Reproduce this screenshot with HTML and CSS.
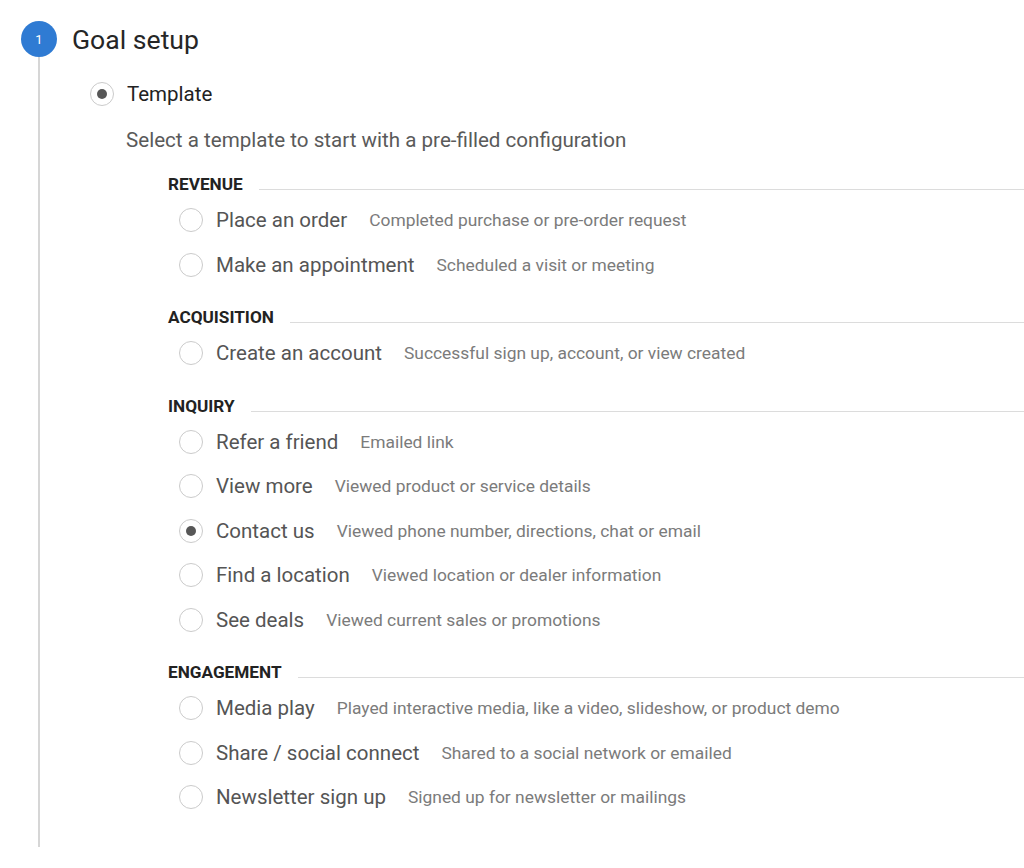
FILE: index.html
```html
<!DOCTYPE html>
<html lang="en">
<head>
  <meta charset="UTF-8" />
  <title>Goal setup</title>
  <link rel="stylesheet" href="styles.css">
</head>
<body>
  <div class="step">
    <div class="step-head">
      <span class="step-num">1</span>
      <h1>Goal setup</h1>
    </div>
    <div class="step-body">
      <label class="template-row">
        <span class="radio checked"></span>
        <span class="template-label">Template</span>
      </label>
      <p class="hint">Select a template to start with a pre-filled configuration</p>

      <div class="group">
        <div class="group-head"><span>REVENUE</span><span class="rule"></span></div>
        <label class="option"><span class="radio"></span><span class="name">Place an order</span><span class="desc">Completed purchase or pre-order request</span></label>
        <label class="option"><span class="radio"></span><span class="name">Make an appointment</span><span class="desc">Scheduled a visit or meeting</span></label>
      </div>

      <div class="group">
        <div class="group-head"><span>ACQUISITION</span><span class="rule"></span></div>
        <label class="option"><span class="radio"></span><span class="name">Create an account</span><span class="desc">Successful sign up, account, or view created</span></label>
      </div>

      <div class="group">
        <div class="group-head"><span>INQUIRY</span><span class="rule"></span></div>
        <label class="option"><span class="radio"></span><span class="name">Refer a friend</span><span class="desc">Emailed link</span></label>
        <label class="option"><span class="radio"></span><span class="name">View more</span><span class="desc">Viewed product or service details</span></label>
        <label class="option"><span class="radio checked"></span><span class="name">Contact us</span><span class="desc">Viewed phone number, directions, chat or email</span></label>
        <label class="option"><span class="radio"></span><span class="name">Find a location</span><span class="desc">Viewed location or dealer information</span></label>
        <label class="option"><span class="radio"></span><span class="name">See deals</span><span class="desc">Viewed current sales or promotions</span></label>
      </div>

      <div class="group">
        <div class="group-head"><span>ENGAGEMENT</span><span class="rule"></span></div>
        <label class="option"><span class="radio"></span><span class="name">Media play</span><span class="desc">Played interactive media, like a video, slideshow, or product demo</span></label>
        <label class="option"><span class="radio"></span><span class="name">Share / social connect</span><span class="desc">Shared to a social network or emailed</span></label>
        <label class="option"><span class="radio"></span><span class="name">Newsletter sign up</span><span class="desc">Signed up for newsletter or mailings</span></label>
      </div>
    </div>
  </div>
</body>
</html>
```

FILE: styles.css
```css
* {
  box-sizing: border-box;
  margin: 0;
  padding: 0;
}
body {
  font-family: Roboto, 'Liberation Sans', sans-serif;
  background: #fff;
  color: #202124;
  overflow: hidden;
}
.step {
  padding-top: 21px;
}
.step-head {
  display: flex;
  align-items: center;
  height: 36px;
  padding-left: 21px;
}
.step-num {
  width: 36px;
  height: 36px;
  border-radius: 50%;
  background: #2f7bd3;
  color: #fff;
  font-size: 13px;
  display: flex;
  align-items: center;
  justify-content: center;
}
h1 {
  font-size: 26.6px;
  font-weight: 400;
  margin-left: 15px;
  color: #262626;
}
.step-body {
  margin-left: 38px;
  border-left: 2px solid #d6d6d6;
  height: 790px;
  padding-top: 17px;
}
.radio {
  width: 24px;
  height: 24px;
  border-radius: 50%;
  border: 1.5px solid #cbcbcb;
  display: flex;
  align-items: center;
  justify-content: center;
  flex-shrink: 0;
}
.radio.checked::after {
  content: "";
  width: 10px;
  height: 10px;
  border-radius: 50%;
  background: #575757;
}
.template-row {
  display: flex;
  align-items: center;
  height: 40px;
  padding-left: 50px;
}
.template-label {
  font-size: 20.5px;
  margin-left: 13px;
  color: #222;
}
.hint {
  margin-top: 12px;
  padding-left: 86px;
  font-size: 20.6px;
  line-height: 28px;
  color: #5a5a5a;
}
.group {
  margin-top: 16.5px;
  padding-left: 128px;
}
.group-head {
  display: flex;
  align-items: center;
  height: 27.5px;
  font-size: 17.2px;
  font-weight: 700;
  color: #222;
}
.rule {
  flex: 1;
  height: 1px;
  margin-top: 11px;
  margin-left: 16px;
  background: #dcdcdc;
}
.option {
  display: flex;
  align-items: center;
  height: 44.5px;
  padding-left: 11px;
}
.name {
  font-size: 20.5px;
  margin-left: 13px;
  color: #555;
}
.desc {
  font-size: 17.4px;
  margin-left: 22px;
  color: #7b7b7b;
}
```
